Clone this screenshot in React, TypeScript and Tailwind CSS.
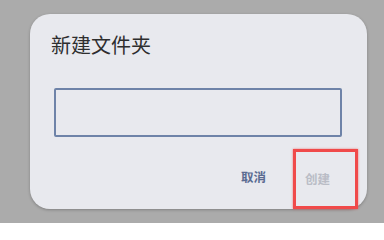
export default function App() {
  return (
    <div
      className="h-[223px] w-[384px] overflow-hidden bg-[#ababab] pl-[30px] pt-[14px]"
      style={{ fontFamily: '"Noto Sans CJK SC", "Noto Sans", sans-serif' }}
    >
      <div className="flex h-[195px] w-[337px] flex-col rounded-[20px] bg-[#e8e9ee] shadow-[0_1px_3px_rgba(0,0,0,0.25)]">
        <h2 className="pl-[21px] pt-[18px] text-[20px] leading-[26px] text-[#2e2e2e]">
          新建文件夹
        </h2>
        <input
          type="text"
          className="mx-[24px] mt-[30px] h-[49px] w-[288px] rounded-[2px] border-2 border-[#6e83a8] bg-transparent outline-none"
        />
        <div className="mt-[28px] flex items-center justify-end pr-[37px]">
          <button
            type="button"
            className="text-[12.5px] font-semibold leading-[16px] text-[#5b6c92]"
          >
            取消
          </button>
          <div className="relative ml-[39px]">
            <button
              type="button"
              className="text-[12.5px] font-semibold leading-[16px] text-[#babdc6]"
            >
              创建
            </button>
            <div className="pointer-events-none absolute left-[-12px] top-[-16px] h-[60px] w-[65px] border-[3px] border-[#f04a4a] shadow-[0_0_2px_rgba(240,74,74,0.7)]" />
          </div>
        </div>
      </div>
    </div>
  );
}
